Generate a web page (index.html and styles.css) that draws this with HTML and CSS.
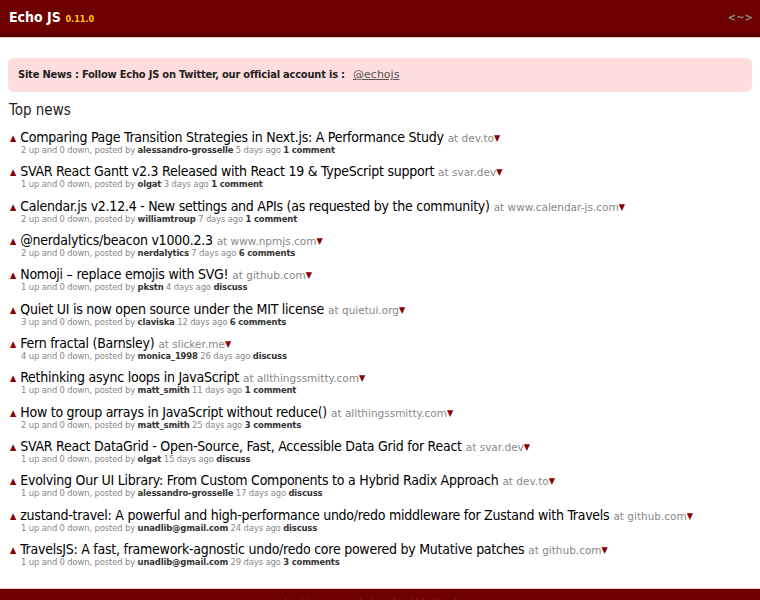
FILE: index.html
```html
<!DOCTYPE html>
<html>
<head>
<meta charset="utf-8">
<link rel="stylesheet" href="styles.css">
</head>
<body>
<header class="topbar">
  <div class="brand"><span class="logo">Echo JS</span> <span class="version">0.11.0</span></div>
  <div class="tilde">&lt;~&gt;</div>
</header>
<div class="content">
  <div class="sitenews">Site News : Follow Echo JS on Twitter, our official account is : <a href="#">@echojs</a></div>
  <h2 class="section">Top news</h2>
  <ol class="news">
    <li><div class="tl"><span class="up">▲</span><a href="#" class="title">Comparing Page Transition Strategies in Next.js: A Performance Study</a> <span class="at">at dev.to</span><span class="down">▼</span></div>
      <div class="meta">2 up and 0 down, posted by <b>alessandro-grosselle</b> 5 days ago <b>1 comment</b></div></li>
    <li><div class="tl"><span class="up">▲</span><a href="#" class="title">SVAR React Gantt v2.3 Released with React 19 &amp; TypeScript support</a> <span class="at">at svar.dev</span><span class="down">▼</span></div>
      <div class="meta">1 up and 0 down, posted by <b>olgat</b> 3 days ago <b>1 comment</b></div></li>
    <li><div class="tl"><span class="up">▲</span><a href="#" class="title">Calendar.js v2.12.4 - New settings and APIs (as requested by the community)</a> <span class="at">at www.calendar-js.com</span><span class="down">▼</span></div>
      <div class="meta">2 up and 0 down, posted by <b>williamtroup</b> 7 days ago <b>1 comment</b></div></li>
    <li><div class="tl"><span class="up">▲</span><a href="#" class="title">@nerdalytics/beacon v1000.2.3</a> <span class="at">at www.npmjs.com</span><span class="down">▼</span></div>
      <div class="meta">2 up and 0 down, posted by <b>nerdalytics</b> 7 days ago <b>6 comments</b></div></li>
    <li><div class="tl"><span class="up">▲</span><a href="#" class="title">Nomoji – replace emojis with SVG!</a> <span class="at">at github.com</span><span class="down">▼</span></div>
      <div class="meta">1 up and 0 down, posted by <b>pkstn</b> 4 days ago <b>discuss</b></div></li>
    <li><div class="tl"><span class="up">▲</span><a href="#" class="title">Quiet UI is now open source under the MIT license</a> <span class="at">at quietui.org</span><span class="down">▼</span></div>
      <div class="meta">3 up and 0 down, posted by <b>claviska</b> 12 days ago <b>6 comments</b></div></li>
    <li><div class="tl"><span class="up">▲</span><a href="#" class="title">Fern fractal (Barnsley)</a> <span class="at">at slicker.me</span><span class="down">▼</span></div>
      <div class="meta">4 up and 0 down, posted by <b>monica_1998</b> 26 days ago <b>discuss</b></div></li>
    <li><div class="tl"><span class="up">▲</span><a href="#" class="title">Rethinking async loops in JavaScript</a> <span class="at">at allthingssmitty.com</span><span class="down">▼</span></div>
      <div class="meta">1 up and 0 down, posted by <b>matt_smith</b> 11 days ago <b>1 comment</b></div></li>
    <li><div class="tl"><span class="up">▲</span><a href="#" class="title">How to group arrays in JavaScript without reduce()</a> <span class="at">at allthingssmitty.com</span><span class="down">▼</span></div>
      <div class="meta">2 up and 0 down, posted by <b>matt_smith</b> 25 days ago <b>3 comments</b></div></li>
    <li><div class="tl"><span class="up">▲</span><a href="#" class="title">SVAR React DataGrid - Open-Source, Fast, Accessible Data Grid for React</a> <span class="at">at svar.dev</span><span class="down">▼</span></div>
      <div class="meta">1 up and 0 down, posted by <b>olgat</b> 15 days ago <b>discuss</b></div></li>
    <li><div class="tl"><span class="up">▲</span><a href="#" class="title">Evolving Our UI Library: From Custom Components to a Hybrid Radix Approach</a> <span class="at">at dev.to</span><span class="down">▼</span></div>
      <div class="meta">1 up and 0 down, posted by <b>alessandro-grosselle</b> 17 days ago <b>discuss</b></div></li>
    <li><div class="tl"><span class="up">▲</span><a href="#" class="title">zustand-travel: A powerful and high-performance undo/redo middleware for Zustand with Travels</a> <span class="at">at github.com</span><span class="down">▼</span></div>
      <div class="meta">1 up and 0 down, posted by <b>unadlib@gmail.com</b> 24 days ago <b>discuss</b></div></li>
    <li><div class="tl"><span class="up">▲</span><a href="#" class="title">TravelsJS: A fast, framework-agnostic undo/redo core powered by Mutative patches</a> <span class="at">at github.com</span><span class="down">▼</span></div>
      <div class="meta">1 up and 0 down, posted by <b>unadlib@gmail.com</b> 29 days ago <b>3 comments</b></div></li>
  </ol>
</div>
<footer class="footer">
  <a href="#">about</a> | <a href="#">source code</a> | <a href="#">rss feed</a> | <a href="#">twitter</a> | <a href="#">apps</a>
</footer>
</body>
</html>
```
FILE: styles.css
```css
html, body {
  margin: 0;
  padding: 0;
  background: #fff;
  font-family: "DejaVu Sans Condensed", "DejaVu Sans", Verdana, sans-serif;
  font-stretch: condensed;
}
.topbar {
  display: flex;
  justify-content: space-between;
  align-items: center;
  height: 33px;
  background: #6d0000;
  border-bottom: 4px solid #580000;
  box-shadow: 0 1px 0 #e8c4c4;
  padding: 0 7px 0 9px;
}
.brand {
  color: #fff;
}
.logo {
  font-size: 14px;
  font-weight: bold;
  color: #fff;
}
.version {
  font-size: 9px;
  font-weight: bold;
  color: #ffcc00;
}
.tilde {
  font-family: "DejaVu Sans", Verdana, sans-serif;
  font-stretch: normal;
  font-size: 10px;
  color: #8a8a8a;
  font-weight: bold;
  margin-top: 2px;
}
.content {
  padding: 21px 8px 0 9px;
}
.sitenews {
  background: #ffdddd;
  border-radius: 6px;
  padding: 10px 9px 11px 10px;
  font-size: 11px;
  line-height: 13px;
  font-weight: bold;
  color: #222;
  margin-left: -1px;
  letter-spacing: -0.2px;
}
.sitenews a {
  color: #555;
  font-weight: normal;
  font-family: "DejaVu Sans", Verdana, sans-serif;
  font-stretch: normal;
  font-size: 11px;
  letter-spacing: 0;
  margin-left: 5px;
}
.section {
  font-size: 15px;
  line-height: 18px;
  font-weight: normal;
  color: #222;
  margin: 9px 0 11px;
}
.news {
  list-style: none;
  margin: 0;
  padding: 0 0 0 1px;
}
.news li {
  margin-bottom: 10.33px;
}
.tl {
  font-size: 14px;
  line-height: 14px;
}
.up {
  display: inline-block;
  color: #8b0000;
  font-size: 9px;
  line-height: 9px;
  margin-right: 4px;
  vertical-align: 1px;
}
.down {
  display: inline-block;
  color: #8b0000;
  font-size: 9px;
  line-height: 9px;
  vertical-align: 1px;
}
.title {
  color: #000;
  text-decoration: none;
  letter-spacing: -0.25px;
}
.at {
  font-family: "DejaVu Sans", Verdana, sans-serif;
  font-stretch: normal;
  font-size: 10.5px;
  color: #888;
}
.meta {
  font-size: 9.4px;
  color: #888;
  line-height: 9px;
  padding-left: 11px;
  letter-spacing: -0.15px;
}
.meta b {
  color: #333;
}
.footer {
  background: #6d0000;
  border-top: 1px solid #e8c4c4;
  margin-top: 22px;
  padding: 8px 0 12px;
  text-align: center;
  font-size: 10px;
  color: #8a2a2a;
}
.footer a {
  color: #8a2a2a;
  text-decoration: none;
}
```
